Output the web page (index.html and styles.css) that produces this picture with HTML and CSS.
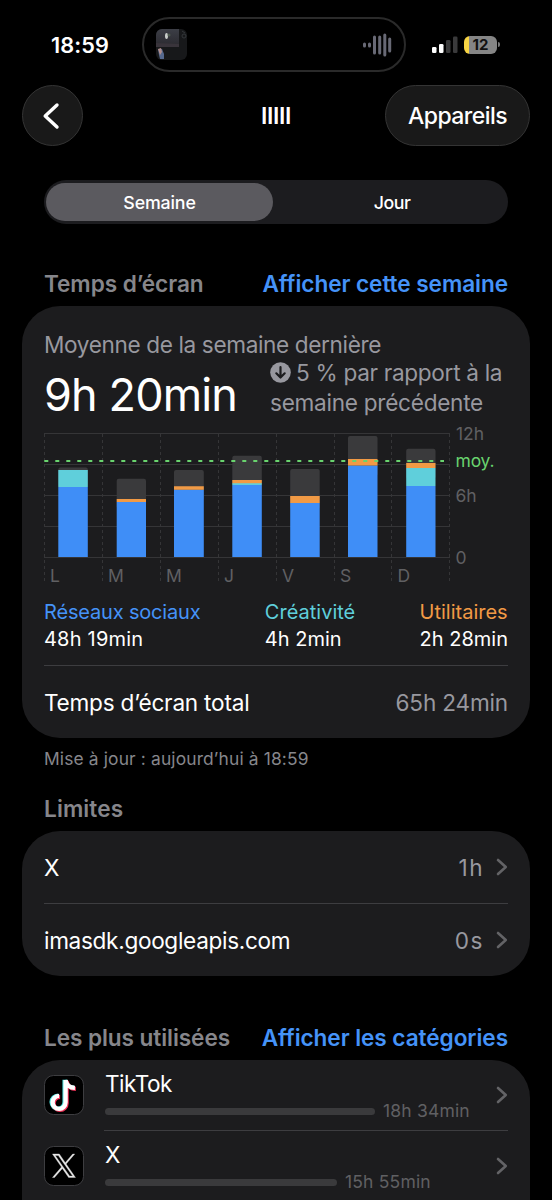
FILE: index.html
```html
<!DOCTYPE html>
<html lang="fr">
<head>
<meta charset="utf-8">
<title>Temps d’écran</title>
<link rel="stylesheet" href="styles.css">
</head>
<body>
<header class="status">
  <div class="clock">18:59</div>
  <div class="island">
    <svg class="thumb" viewBox="0 0 31 31"><defs><clipPath id="tc"><rect width="31" height="31" rx="6"/></clipPath><linearGradient id="tg" x1="0" y1="0" x2="0" y2="1"><stop offset="0" stop-color="#3c3e46"/><stop offset="1" stop-color="#2b2a30"/></linearGradient></defs><g clip-path="url(#tc)"><rect width="31" height="31" fill="#17181a"/><rect width="23" height="17" fill="url(#tg)"/><path d="M0 14l23 1v3H0z" fill="#39343b"/><ellipse cx="10.500" cy="7" rx="1.500" ry="3" fill="#c9cdca"/><circle cx="13" cy="6" r="1.500" fill="#4d5a4f"/><path d="M2 20l4 0 2 5 0 5-4 0-1-4z" fill="#56698f"/><path d="M2 20l3-1 1 4-2 3z" fill="#b08e8c"/><circle cx="28" cy="7" r="2" fill="none" stroke="#34373a"/><path d="M26 2l3 2" stroke="#34373a"/></g></svg>
    <svg class="wave" viewBox="0 0 30 26"><g stroke="#686975" stroke-width="3" stroke-linecap="round"><path d="M2.500 12v2M7.500 12v2M12.500 5v16M17.700 5v16M22.800 3v20M27.700 7v12"/></g></svg>
  </div>
  <svg class="signal" viewBox="0 0 26 18"><rect x="0" y="11" width="4.500" height="6" rx="1.300" fill="#fff"/><rect x="7" y="8" width="4.500" height="9" rx="1.300" fill="#fff"/><rect x="14" y="4" width="4.500" height="13" rx="1.300" fill="#3a3a3b"/><rect x="21" y="0.500" width="4.500" height="16.500" rx="1.300" fill="#3a3a3b"/></svg>
  <div class="battery"><span>12</span></div>
</header>
<nav class="nav">
  <button class="back"><svg viewBox="0 0 18 28"><path d="M15 3L3.200 14 15 25" fill="none" stroke="#fff" stroke-width="3.400" stroke-linecap="round" stroke-linejoin="round"/></svg></button>
  <h1>IIIII</h1>
  <button class="devices">Appareils</button>
</nav>
<div class="segmented"><span class="on">Semaine</span><span class="off">Jour</span></div>

<div class="head first"><h2 class="h-time">Temps d’écran</h2><a class="a-week">Afficher cette semaine</a></div>
<section class="card">
  <p class="average">Moyenne de la semaine dernière</p>
  <div class="summary">
    <strong>9h 20min</strong>
    <p><svg viewBox="0 0 21 21"><circle cx="10.500" cy="10.500" r="10.300" fill="#98989f"/><path d="M10.500 5.200v10M6.300 11.300l4.200 4.200 4.200-4.200" fill="none" stroke="#1c1c1e" stroke-width="2.200" stroke-linecap="round" stroke-linejoin="round"/></svg><span class="c1">5 % par rapport à la</span><br><span class="c2">semaine précédente</span></p>
  </div>
  <svg class="chart" viewBox="44 418 486 180">
    <g stroke="#353537" stroke-width="1"><path d="M44 433.500h406M44 464.500h406M44 495.500h406M44 526.500h406M44 557.500h406"/><path stroke-dasharray="3 3" d="M44.500 434v150M102.500 434v150M160.500 434v150M218.500 434v150M276.500 434v150M334.500 434v150M391.500 434v150M449.500 434v150"/></g>
    <g fill="#3a3a3c"><rect x="58.300" y="467.500" width="29.500" height="20" rx="2"/><rect x="116.700" y="478.700" width="29.300" height="30" rx="2"/><rect x="174" y="470" width="29.800" height="30" rx="2"/><rect x="232.300" y="455.800" width="29.500" height="40" rx="2"/><rect x="290.200" y="469" width="29.500" height="40" rx="2"/><rect x="348" y="436" width="29.500" height="40" rx="2"/><rect x="406.200" y="448.700" width="29.300" height="30" rx="2"/></g>
    <g fill="#3f8ef7"><path d="M58.300 487h29.500v70H58.300zM116.700 502h29.300v55h-29.300zM174 489.500h29.800V557H174zM232.300 485h29.500v72h-29.500zM290.200 503h29.500v54h-29.500zM348 465.500h29.500V557H348zM406.200 486h29.300v71h-29.300z"/></g>
    <g fill="#5fcfdb"><path d="M58.300 470h29.500v17H58.300zM232.300 483h29.500v2h-29.500zM406.200 468h29.300v18h-29.300z"/></g>
    <g fill="#f19a45"><path d="M116.700 499h29.300v3h-29.300zM174 486.200h29.800v3.500H174zM232.300 480h29.500v3.300h-29.500zM290.200 496h29.500v7h-29.500zM348 459h29.500v6.500H348zM406.200 463h29.300v5h-29.300z"/></g>
    <path d="M44.300 460.900H444" stroke="#69d36e" stroke-width="2" stroke-dasharray="4 7"/>
    <g class="scale"><text x="456" y="440">12h</text><text x="455.500" y="467" class="mean">moy.</text><text x="455.500" y="501.700">6h</text><text x="455.500" y="563.500">0</text></g>
    <g class="days"><text x="50" y="582">L</text><text x="108" y="582">M</text><text x="166" y="582">M</text><text x="224" y="582">J</text><text x="282" y="582">V</text><text x="340" y="582">S</text><text x="397.500" y="582">D</text></g>
  </svg>
  <div class="legend">
    <div class="social"><b>Réseaux sociaux</b><span>48h 19min</span></div>
    <div class="creative"><b>Créativité</b><span>4h 2min</span></div>
    <div class="utility"><b>Utilitaires</b><span>2h 28min</span></div>
  </div>
  <hr>
  <div class="row"><span class="total">Temps d’écran total</span><em class="total-value">65h 24min</em></div>
</section>
<p class="note">Mise à jour : aujourd’hui à 18:59</p>

<div class="head limits"><h2>Limites</h2></div>
<section class="card">
  <div class="row"><span>X</span><em class="wide">1h</em><svg class="chev" viewBox="0 0 12 18"><path d="M2 2l7.800 7L2 16"/></svg></div>
  <hr>
  <div class="row"><span class="domain">imasdk.googleapis.com</span><em class="wide">0s</em><svg class="chev" viewBox="0 0 12 18"><path d="M2 2l7.800 7L2 16"/></svg></div>
</section>

<div class="head used"><h2 class="h-used">Les plus utilisées</h2><a class="a-cat">Afficher les catégories</a></div>
<section class="card apps">
  <div class="app">
    <svg class="icon" viewBox="0 0 40 40"><rect x=".5" y=".5" width="39" height="39" rx="9" fill="#000" stroke="#3d3d40"/><g fill="none" stroke-width="4.300"><path d="M21.600 5v22.300a6.500 6.500 0 1 1-6.500-6.500M21.600 5c.6 5 4.500 7.800 9.300 7.900" stroke="#55e8e5" transform="translate(-1 -.2)"/><path d="M21.600 5v22.300a6.500 6.500 0 1 1-6.500-6.500M21.600 5c.6 5 4.500 7.800 9.300 7.900" stroke="#ee3157" transform="translate(1 1)"/><path d="M21.600 5v22.300a6.500 6.500 0 1 1-6.500-6.500M21.600 5c.6 5 4.500 7.800 9.300 7.900" stroke="#fff"/></g></svg>
    <div class="usage"><span class="tiktok">TikTok</span><div class="meter"><i style="width:270px"></i><small>18h 34min</small></div></div>
    <svg class="chev" viewBox="0 0 12 18"><path d="M2 2l7.800 7L2 16"/></svg>
  </div>
  <hr>
  <div class="app">
    <svg class="icon" viewBox="0 0 40 40"><rect x=".5" y=".5" width="39" height="39" rx="9" fill="#000" stroke="#3d3d40"/><g transform="translate(8.200 8) scale(.98)" fill="#e6e6e6" stroke="#e6e6e6" stroke-width=".35"><path d="M14.240 10.160 22.980 0h-2.070l-7.590 8.820L7.260 0H.270l9.170 13.340L.270 24h2.070l8.020-9.320L16.760 24h6.990zM11.410 13.460l-.93-1.330L3.090 1.560h3.180l5.970 8.530.93 1.330 7.750 11.090h-3.180z"/></g></svg>
    <div class="usage"><span>X</span><div class="meter"><i style="width:232px"></i><small>15h 55min</small></div></div>
    <svg class="chev" viewBox="0 0 12 18"><path d="M2 2l7.800 7L2 16"/></svg>
  </div>
</section>
</body>
</html>
```
FILE: styles.css
```css
* { box-sizing: border-box; margin: 0; padding: 0; }
html { background: #000; }
body { width: 552px; height: 1200px; overflow: hidden; background: #000; color: #fff; font: 400 22.6px/28px Inter, sans-serif; white-space: nowrap; }
svg { display: block; flex: none; }

.status { display: flex; height: 85px; padding: 17px 52px 0 51px; }
.clock { width: 91px; font-size: 21.7px; font-weight: 600; line-height: 56px; letter-spacing: .1px; }
.island { display: flex; justify-content: space-between; align-items: center; width: 264px; height: 55px; padding: 0 12px; border: 2px solid #2a2a2a; border-radius: 28px; }
.thumb { width: 31px; height: 31px; }
.wave { width: 30px; height: 26px; }
.signal { width: 26px; height: 18px; margin: 19px 6px 0 26px; }
.battery { position: relative; width: 33px; height: 18px; margin-top: 19px; border-radius: 6px; background: linear-gradient(90deg, #f7d444 5px, #858585 5px); color: #111; text-align: center; font-size: 15px; font-weight: 700; line-height: 18px; }
.battery::after { content: ""; position: absolute; left: 34px; top: 6px; width: 2px; height: 5px; border-radius: 0 2px 2px 0; background: #777; }

.nav { display: grid; grid-template-columns: 145px 1fr 145px; align-items: center; height: 61px; margin: 0 22px; }
button { border: 1px solid #343434; background: #191919; color: #fff; font: inherit; }
.back { display: grid; place-items: center; width: 61px; height: 61px; padding-right: 4px; border-radius: 50%; }
.back svg { width: 18px; height: 28px; }
.nav h1 { text-align: center; font-size: 23px; font-weight: 600; letter-spacing: -.4px; }
.devices { height: 61px; border-radius: 31px; font-size: 23px; font-weight: 500; letter-spacing: -.55px; }

.segmented { display: grid; grid-template-columns: 227px 1fr; height: 44px; margin: 34px 44px 0; padding: 3px 2px; border-radius: 22px; background: #1c1c1f; font-size: 17.8px; font-weight: 500; line-height: 39px; text-align: center; letter-spacing: -.15px; }
.segmented .on { height: 38px; border-radius: 19px; background: #5b5a5f; }
.segmented .off { padding-left: 5px; letter-spacing: -.5px; }

.head { display: flex; justify-content: space-between; margin: 0 44px; }
.head h2 { color: #86868b; font-size: 22.6px; font-weight: 600; letter-spacing: -.07px; }
.head a { color: #4593f8; font-weight: 600; letter-spacing: -.06px; }
.first { height: 82px; padding-top: 46px; }
.limits h2 { letter-spacing: .1px; }
.used { height: 84px; padding-top: 48px; }

.card { margin: 0 22px; padding: 0 22px; border-radius: 38px; background: #1c1c1e; }
.average { height: 52px; padding-top: 25px; color: #98989f; letter-spacing: -.37px; }
.summary { display: flex; height: 60px; color: #98989f; line-height: 30px; }
.summary strong { width: 226px; color: #fff; font-size: 45px; font-weight: 400; line-height: 74px; letter-spacing: -.85px; }
.summary p svg { display: inline-block; width: 21px; height: 21px; margin-right: 5px; vertical-align: -2px; }
.c1 { letter-spacing: -.31px; }
.c2 { letter-spacing: -.27px; }
.chart { width: 486px; height: 180px; }
.chart text { fill: #606063; font-size: 17.500px; }
.chart .mean { fill: #69d36e; letter-spacing: -.2px; }
.legend { display: flex; justify-content: space-between; height: 55px; padding-top: .6px; font-size: 20px; line-height: 27.5px; }
.legend b, .legend span { display: block; font-weight: 400; }
.social b { color: #4593f8; letter-spacing: -.17px; }
.social span { letter-spacing: .2px; }
.creative b { color: #5fcfdb; }
.utility b { color: #f19a45; }
hr { height: 1px; border: 0; background: #3d3d40; }
.legend + hr { margin-top: 12px; }
.row { display: flex; align-items: center; height: 72px; }
.row span, .row em { padding-top: 2px; }
.row em { margin-left: auto; color: #98989f; font-style: normal; }
.row .total { letter-spacing: -.22px; }
.row .total-value { letter-spacing: -.18px; }
.row .domain { letter-spacing: -.32px; }
.row .wide { letter-spacing: 1.500px; }
.chev { width: 12px; height: 18px; margin-left: 12px; }
.chev path { fill: none; stroke: #636366; stroke-width: 2.600; stroke-linecap: round; stroke-linejoin: round; }
.note { height: 49px; padding: 7px 44px 0; color: #86868b; font-size: 17.400px; letter-spacing: .14px; }
.limits { height: 44px; padding: 8px 0 0; }

.app { display: flex; height: 70px; padding-top: 15px; }
.icon { width: 40px; height: 40px; }
.usage { flex: 1; margin: -5px 0 0 21px; }
.usage > span { display: block; }
.tiktok { letter-spacing: -.5px; }
.meter { display: flex; align-items: center; height: 26px; }
.meter i { height: 7px; border-radius: 4px; background: #3a3a3c; }
.meter small { margin-left: 8px; color: #606063; font-size: 17.500px; letter-spacing: .18px; }
.app .chev { margin-top: 11px; }
.apps { height: 150px; border-radius: 38px 38px 0 0; }
.apps hr { margin-left: 60px; }
```
